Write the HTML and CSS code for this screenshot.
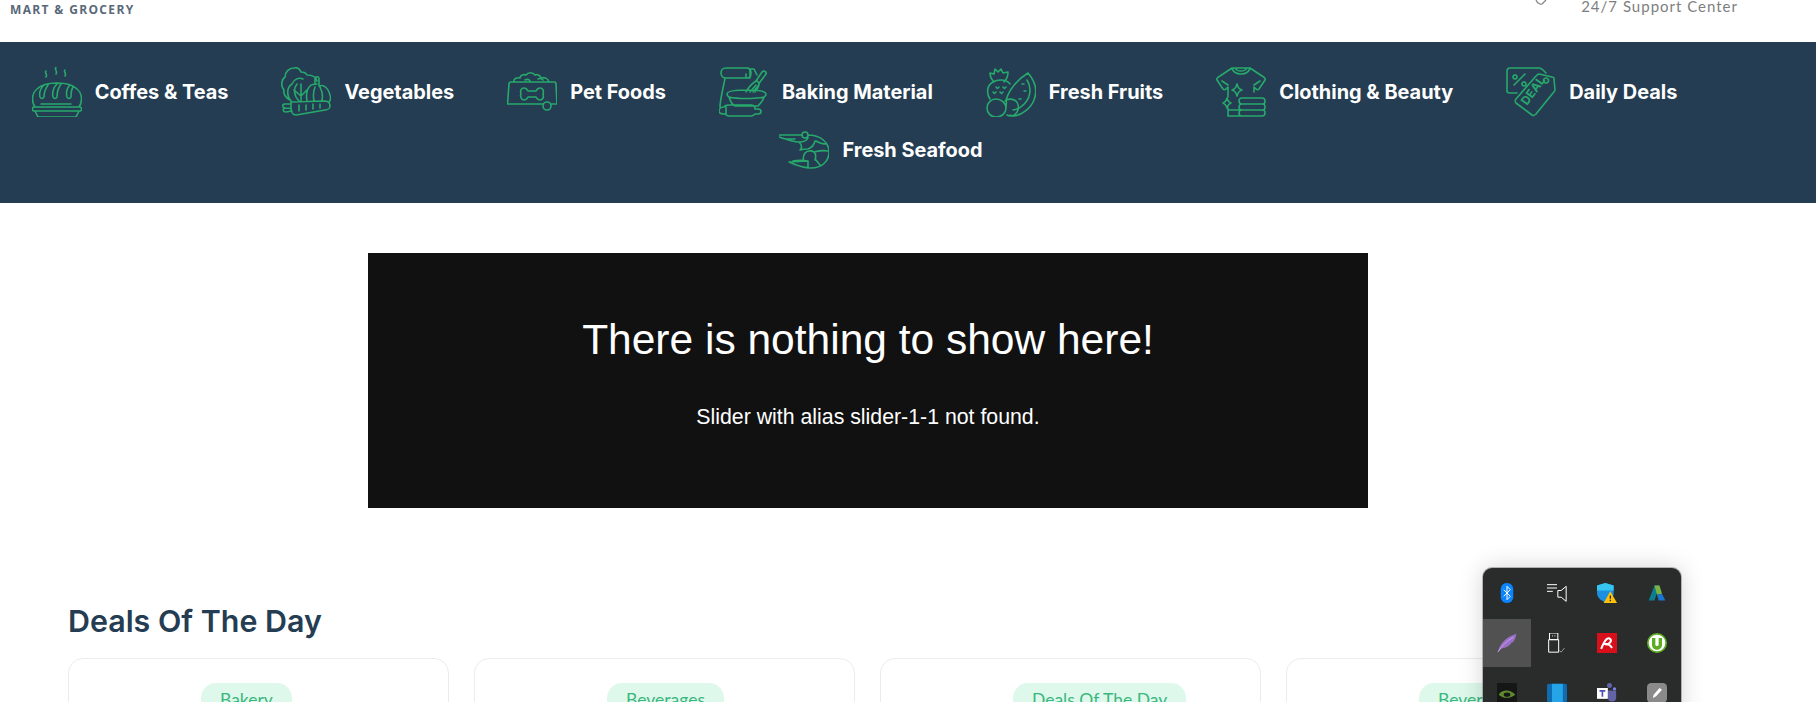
FILE: index.html
```html
<!DOCTYPE html>
<html lang="en">
<head>
    <meta charset="UTF-8">
    <title>Mart &amp; Grocery</title>
    <link rel="stylesheet" href="styles.css">
</head>

<body>
<div class="page">
    <header class="top">
        <div class="logo">MART &amp; GROCERY</div>
        <div class="support">
            <svg class="support-icon" viewBox="0 0 12 5"><path d="M1 0q1 3 4 4 1 .5 2 0l4-4"/></svg>
            <span>24/7 Support Center</span>
        </div>
    </header>

    <nav class="cats">
        <a class="cat">
            <svg viewBox="0 0 50 50"><path d="M3 40c-4-6-3-14 2-18 5-5 12-6 20-6s15 1 20 6c5 4 6 12 2 18M9 37h30M2 40h46q1.500 0 1.500 2t-1.500 2H2q-1.500 0-1.500-2T2 40zM3 44l2 4q.5 2 2 2h36q1.500 0 2-2l2-4M12 18c-3 3-5 8-4 12 1 2 3 2 4 0 0-4 1-8 4-12M25 17c-3 3-5 8-4 13 1 2 3 2 4 0 0-5 1-9 4-13M38 18c-3 3-4 8-3 12 1 2 3 2 4 0 0-4 0-7 2-10M14 4c-2 2 2 3 0 6M24 0c-2 3 2 4 0 7M33 3c-2 2 2 3 0 6"/></svg>
            <span>Coffes &amp; Teas</span>
        </a>
        <a class="cat">
            <svg viewBox="0 0 50 50"><path d="M9 33C5 31 2 27 3 23-1 18 1 12 4 10c0-5 4-9 9-9 3-1 6 1 7 4 3 0 5 1 6 3 5 0 9 2 10 6M10 34c-5-6-4-14 1-17 2-5 7-7 11-5M18 34c-5-5-6-12-2-17M20 17v12l7-7M20 29l-7-6M20 29v6M26 34c-1-6 0-12 3-15 2-2 5-2 7-2M33 34c-1-5-1-9 1-14M41 33c1-4 0-9-2-13M34 17v-5c0-3 4-3 4 0v7M38 19c5-2 10 3 11 9 1 3 0 6-1 7M10 35l33-1c4 0 6 2 6 5 0 2-2 4-5 4L15 48c-3 0-5-3-5-7zM10 37H4c-3 0-3 3 0 4l6 .5M4 41c-3 1-2 4 1 4l6-1M18 38v6M25 38v5M32 37v5M39 37v4"/></svg>
            <span>Vegetables</span>
        </a>
        <a class="cat">
            <svg viewBox="0 0 50 50"><path d="M.5 37 2 17c0-1 1-2 2-2h43c1 0 2 1 2 2l1 20M.5 37H36M44 37h6M7 15c-1-3 3-5 6-4 0-3 4-4 6-3 2-3 7-3 9 0 2-1 5 0 6 3 3-1 7 0 8 4M18 13c2-1 4-1 5 1M31 12c2-1 4 0 5 1M17 21c-3 0-4 3-3 6-1 2 0 6 3 6 2 0 3-1 4-3h8c1 2 2 3 4 3 3 0 4-3 3-6 1-3 0-6-3-6-2 0-3 1-4 3h-8c-1-2-2-3-4-3zM40 35a4 4 0 1 0 0 8 4 4 0 0 0 0-8z"/></svg>
            <span>Pet Foods</span>
        </a>
        <a class="cat">
            <svg viewBox="0 0 50 50"><path d="M7 1h21c3 0 4 2 4 5s-1 5-4 5H7C4 11 2 9 2 6s2-5 5-5zM28 1c3 0 3 2 3 4v6h-4V7M32 2h3l3 6M6 11C5 18 1 32 1 40M37 14l6-9c2-2 5 0 4 2l-6 8-3 6M27 25c2-4 7-9 10-11 2 0 3 2 3 4-1 3-2 5-4 7M31 25l6-7M34 25l4-5M8 27c0-3 8-4 20-4s19 1 19 4c0 2-1 2-2 3-1 4-4 7-6 9H16c-3-2-5-5-6-9-1-1-2-1-2-3zM10 30c8 2 26 2 35 0M0 44c0-2 2-4 5-4 1-2 3-2 5-2h22c3 0 4 2 4 4h3c2 0 3 1 3 2.500S41 47 39 47h-3c-1 1-2 2-4 2H10c-2 0-3-1-4-2-3 0-6-1-6-3zM7 40v7"/></svg>
            <span>Baking Material</span>
        </a>
        <a class="cat">
            <svg viewBox="0 0 50 50"><path d="M4 32C0 26 1 18 7 15c5-3 13-3 17 2M8 15c-2-2-4-5-4-9l4 1 1-5 3 3 3-3 2 4 5-1c0 4-1 7-4 10M10 20l1.500 1.500 1.500-1.500M17 20l1.500 1.500 1.500-1.500M7 25l1.500 1.500 1.500-1.500M14 25l1.500 1.500 1.500-1.500M20 33c3-10 11-20 22-27 6 7 10 17 6 27-3 8-12 15-20 16-2 0-3 0-4-1M27 43c8-1 17-9 17-20 0-4-1-7-3-10M36 17h2M38 24h2M33 32h2M19 34c2-2 7-3 11 0 3 3 3 8 1 11-2 4-7 5-10 3M10 32c5 0 10 4 10 9 0 5-4 9-10 9-5 0-9-4-9-9 0-5 4-9 9-9zM20 41c0-3 1-6 0-8"/></svg>
            <span>Fresh Fruits</span>
        </a>
        <a class="cat">
            <svg viewBox="0 0 50 50"><path d="M16 1h18l12 8c2 1 4 3 3 4l-6 9c-1 1-2 1-3 0l-2-2v5M16 1 4 9c-2 1-4 3-3 4l6 9c1 1 2 1 3 0l2-2v10M16 1c1 4 5 6 9 6s8-2 9-6M19 1c1 2 3 3 6 3s5-1 6-3M6 14l6 4M44 14l-6 4M21 17c1 4 2 5 5 6-3 1-4 2-5 6-1-4-2-5-5-6 3-1 4-2 5-6zM11 31c1 3 1 4 4 5-3 1-3 2-4 5-1-3-1-4-4-5 3-1 3-2 4-5zM12 41v8h34c2 0 3-1 3-3s-1-3-2-3c1 0 2-1 2-3s-1-3-2-3c1 0 2-1 2-3s-1-3-3-3H26c-2 0-3 1-3 3s1 3 3 3c-2 0-3 1-3 3s1 3 3 3c-2 0-3 1-3 3s1 3 3 3M26 37h21M26 43h21M12 43h11"/></svg>
            <span>Clothing &amp; Beauty</span>
        </a>
        <a class="cat">
            <svg viewBox="0 0 50 50"><path d="M11 26H4c-2 0-3-1-3-2V4c0-2 1-3 3-3h29c2 0 3 1 4 2l3 3M8 18 19 7M9 8a2 2 0 1 0 .01 0M18 15a2 2 0 1 0 .01 0M33 7l13 3c1 0 2 1 2 2l1 11c0 1-1 2-2 3L30 47c-1 1-3 2-4 1L10 36c-1-1-1-3 0-4L30 9c1-1 2-2 3-2zM40 11a2.500 2.500 0 1 0 .01 0"/><text class="deal-mark" x="0" y="0" transform="translate(21 39) rotate(-54)">DEAL</text></svg>
            <span>Daily Deals</span>
        </a>
        <a class="cat">
            <svg viewBox="0 0 50 50"><path d="M0 10h23M0 12c6 2 14 5 20 5s8-2 9-4M6 14h10M23 10a3 3 0 1 0 6 0 3 3 0 0 0-6 0zM29 10c12 0 21 7 21 17s-8 16-18 16c-6 0-11-1-22-6M10 37l19-1c-5-1-10-1-15 0M20 17c3 3 3 6 1 8M21 25c3-1 5-1 8-1 3-1 6-4 7-8M25 36c-1-2-1-5 1-8 2-2 6-3 9-1 4-1 9-2 14-1M35 27c2 2 2 5 1 8M37 16c3 2 6 3 11 3M37 35l4 5M29 43v-7"/></svg>
            <span>Fresh Seafood</span>
        </a>
    </nav>

    <section class="banner-wrap">
        <div class="banner">
            <h2>There is nothing to show here!</h2>
            <p>Slider with alias slider-1-1 not found.</p>
        </div>
    </section>

    <section class="deals">
        <h3>Deals Of The Day</h3>
        <div class="deal-row">
            <div class="deal"><span class="tag">Bakery</span></div>
            <div class="deal"><span class="tag">Beverages</span></div>
            <div class="deal"><span class="tag">Deals Of The Day</span></div>
            <div class="deal"><span class="tag">Beverages</span></div>
        </div>
    </section>

    <aside class="tray">
        <div class="tray-cell">
            <svg viewBox="0 0 24 24"><rect x="4.500" y="0" width="15" height="24" rx="7" fill="#0a84ff"/><path class="w" d="M8 8l8 8-4 4V4l4 4-8 8"/></svg>
        </div>
        <div class="tray-cell">
            <svg viewBox="0 0 24 24"><path class="w" d="M0 2h12M0 6h12M0 10h7M13 9h4l6-5v18l-6-5h-4z"/></svg>
        </div>
        <div class="tray-cell">
            <svg viewBox="0 0 24 24"><path d="M10 0l10 3v9c0 5-4 9-10 11C4 21 0 17 0 12V3z" fill="#1c8fe0"/><path d="M10 0l10 3v6H0V3z" fill="#36c5f0"/><path d="M16 10l8 14H8z" fill="#ffc107"/><path d="M16 15v4M16 20v2" stroke="#222" stroke-width="1.500"/></svg>
        </div>
        <div class="tray-cell">
            <svg viewBox="0 0 24 24"><path d="M9 3h6L9 21H2z" fill="#0b7f8c"/><path d="M9 3h6l3 10-6 1z" fill="#7cb342"/><path d="M12 14l6-1 4 8h-8z" fill="#1976d2"/></svg>
        </div>
        <div class="tray-cell is-active">
            <svg viewBox="0 0 24 24"><path d="M1 23C3 13 11 5 23 1c0 5-2 8-4 10-1 0-2 1-3 1 1 0 1 .5 1 1-4 4-8 5-12 6z" fill="#9a6fc7"/><path d="M1 23C6 15 12 9 20 5" stroke="#d9b8f2" stroke-width=".8" fill="none"/></svg>
        </div>
        <div class="tray-cell">
            <svg viewBox="0 0 24 24"><path class="w" d="M3 0h10v8H3zM2 8h12v15H2zM6 3.500h1M9 3.500h1"/><path d="M15 21l2 2 4-5" fill="none" stroke="#aaa" stroke-width="1"/></svg>
        </div>
        <div class="tray-cell">
            <svg viewBox="0 0 24 24"><rect width="24" height="24" fill="#d9101c"/><path d="M5 19c2-5 4-10 7-12 3-2 6 1 4 4-2 3-5 3-7 2 4 0 7 1 9 5" fill="none" stroke="#fff" stroke-width="2.400"/></svg>
        </div>
        <div class="tray-cell">
            <svg viewBox="0 0 24 24"><circle cx="12" cy="12" r="11" fill="#fff" stroke="#5cac24" stroke-width="2"/><path d="M6 6v8c0 4 3 6 6 6s6-2 6-6V6h-4v8c0 2-4 2-4 0V6z" fill="#5cac24"/></svg>
        </div>
        <div class="tray-cell">
            <svg viewBox="0 0 24 24"><rect width="24" height="24" fill="#161616"/><path d="M2 14c4-6 13-7 20 0-6 5-15 5-20 0z" fill="#5f8a2e"/><ellipse cx="12" cy="14" rx="4" ry="2.500" fill="#161616"/></svg>
        </div>
        <div class="tray-cell">
            <svg viewBox="0 0 24 24"><rect y="1" width="24" height="22" rx="2" fill="#0f6cb0"/><rect x="6" y="1" width="13" height="22" fill="#25a5e8"/></svg>
        </div>
        <div class="tray-cell">
            <svg viewBox="0 0 24 24"><circle cx="15" cy="3" r="3" fill="#6264a7"/><circle cx="21" cy="7" r="2" fill="#7b83eb"/><path d="M13 9h10v9c0 3-3 5-6 4-3 0-4-3-4-5z" fill="#6264a7"/><rect y="6" width="13" height="13" fill="#fff"/><path d="M3 9.500h7M6.500 9.500v7" stroke="#4b4fb5" stroke-width="2"/></svg>
        </div>
        <div class="tray-cell">
            <svg viewBox="0 0 24 24"><rect width="24" height="24" rx="5" fill="#8a8a8a"/><path d="M7 18l1-4 7-8 3 2-7 8z" fill="#fff"/></svg>
        </div>
    </aside>
</div>
</body>
</html>
```

FILE: styles.css
```css
html, body {
    margin: 0;
    height: 702px;
    overflow: hidden;
    background: #fff;
}

.page {
    position: relative;
    height: 702px;
    overflow: hidden;
    font-family: Inter, "Open Sans", sans-serif;
}

.top {
    display: flex;
    justify-content: space-between;
    align-items: flex-start;
    height: 42px;
    box-sizing: border-box;
    padding: 0 78px 0 10px;
}

.logo {
    margin-top: 3px;
    font-family: "Open Sans", sans-serif;
    font-size: 12px;
    line-height: 14px;
    font-weight: 700;
    letter-spacing: 1.350px;
    color: #5a6878;
}

.support {
    display: flex;
    align-items: flex-start;
    gap: 34px;
    font-family: Lato, sans-serif;
    font-size: 15px;
    line-height: 12px;
    letter-spacing: 1px;
    color: #7e7e7e;
}

.support-icon {
    width: 12px;
    height: 5px;
    fill: none;
    stroke: #7e7e7e;
    stroke-width: 1.200;
}

.cats {
    display: flex;
    flex-wrap: wrap;
    justify-content: center;
    align-content: flex-start;
    row-gap: 8px;
    height: 161px;
    box-sizing: border-box;
    padding: 25px 54px 0 0;
    background: #253d52;
}

.cat {
    display: flex;
    align-items: center;
    gap: 13px;
    height: 50px;
    margin-right: 53px;
    font-size: 19.900px;
    font-weight: 700;
    color: #fff;
}

.cat:last-child {
    margin-right: 0;
}

.cat svg {
    width: 50px;
    height: 50px;
    flex: none;
    fill: none;
    stroke: #27a96c;
    stroke-width: 1.600;
    stroke-linecap: round;
    stroke-linejoin: round;
}

.deal-mark {
    fill: #27a96c;
    stroke: none;
    font-family: Inter, sans-serif;
    font-size: 12px;
    font-weight: 700;
}

.banner-wrap {
    display: flex;
    justify-content: center;
    padding: 50px 80px 0 0;
}

.banner {
    width: 1000px;
    height: 255px;
    box-sizing: border-box;
    padding-top: 60px;
    background: #111;
    color: #fff;
    text-align: center;
    font-family: "Liberation Sans", Arial, sans-serif;
}

.banner h2 {
    margin: 0;
    font-size: 42.500px;
    line-height: 54px;
    font-weight: 400;
}

.banner p {
    margin: 37px 0 0;
    font-size: 21.300px;
    line-height: 26px;
}

.deals {
    padding: 95px 0 0 68px;
}

.deals h3 {
    margin: 0;
    font-size: 30.400px;
    line-height: 36px;
    font-weight: 600;
    color: #253d52;
}

.deal-row {
    display: flex;
    gap: 25px;
    margin-top: 19px;
}

.deal {
    flex: none;
    width: 381px;
    height: 300px;
    box-sizing: border-box;
    padding: 24px 0 0 132px;
    border: 1px solid #ececec;
    border-radius: 15px;
}

.tag {
    display: inline-block;
    padding: 5px 19px;
    border-radius: 15px;
    background: #def9ec;
    color: #3bb77e;
    font-family: Lato, sans-serif;
    font-size: 17.500px;
    line-height: 24px;
}

/* windows tray popup sitting over the page */
.tray {
    position: absolute;
    left: 1483px;
    top: 568px;
    width: 198px;
    height: 160px;
    box-sizing: border-box;
    padding-top: 1px;
    display: grid;
    grid-template-columns: repeat(4, 48px);
    grid-auto-rows: 48px;
    gap: 2px;
    align-content: start;
    background: #2a2b2b;
    border-radius: 9px;
    box-shadow: 0 0 0 1px rgba(120, 120, 120, 0.5), 0 0 24px rgba(0, 0, 0, 0.18);
}

.tray-cell {
    display: flex;
    align-items: center;
    justify-content: center;
}

.tray-cell svg {
    width: 20px;
    height: 20px;
}

.tray-cell .w {
    fill: none;
    stroke: #fff;
    stroke-width: 1.200;
}

.is-active {
    background: #515151;
}
```
